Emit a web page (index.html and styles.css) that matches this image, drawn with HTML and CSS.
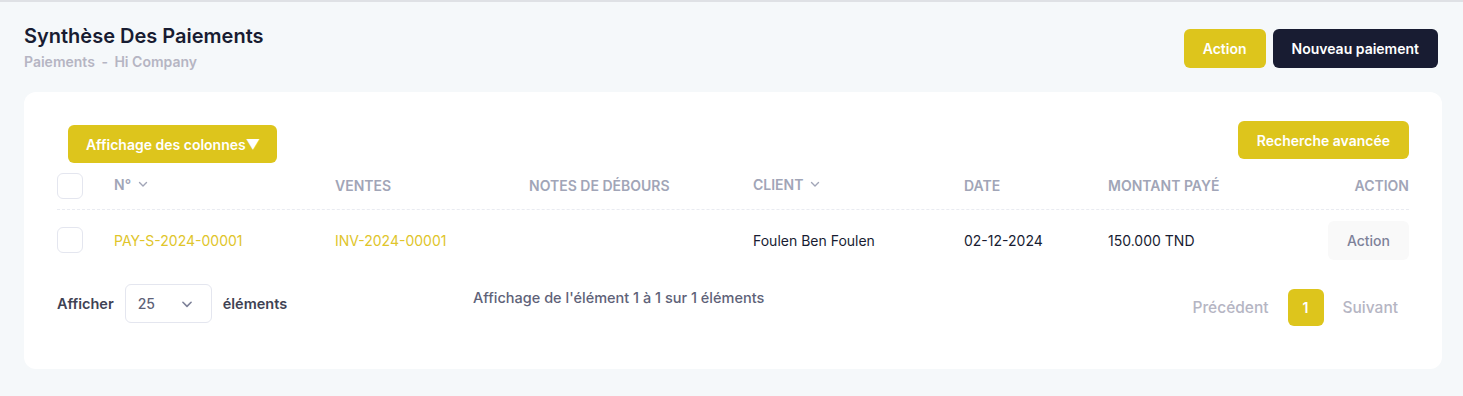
FILE: index.html
```html
<!DOCTYPE html>
<html>
<head>
	<meta charset="utf-8">
	<meta name="viewport" content="width=device-width, initial-scale=1">
	<title>Synthèse Des Paiements</title>
	<link rel="stylesheet" href="styles.css">
</head>
<body>
	<div class="page-head">
		<div>
			<h1 class="page-title">Synthèse Des Paiements</h1>
			<div class="crumbs">Paiements <span class="sep">-</span> Hi Company</div>
		</div>
		<div class="head-actions">
			<button class="btn btn-yellow">Action</button>
			<button class="btn btn-dark">Nouveau paiement</button>
		</div>
	</div>

	<div class="card">
		<div class="toolbar">
			<button class="btn btn-yellow btn-cols">Affichage des colonnes▼</button>
			<button class="btn btn-yellow">Recherche avancée</button>
		</div>

		<div class="grid head-row">
			<div><span class="check"></span></div>
			<div class="th">N° <svg class="chev" viewBox="0 0 12 12"><path d="M2.5 4.5 6 8l3.5-3.5"/></svg></div>
			<div class="th">Ventes</div>
			<div class="th">Notes de débours</div>
			<div class="th">Client <svg class="chev" viewBox="0 0 12 12"><path d="M2.5 4.5 6 8l3.5-3.5"/></svg></div>
			<div class="th">Date</div>
			<div class="th">Montant payé</div>
			<div class="th right">Action</div>
		</div>

		<div class="grid data-row">
			<div><span class="check"></span></div>
			<div class="link">PAY-S-2024-00001</div>
			<div class="link">INV-2024-00001</div>
			<div></div>
			<div>Foulen Ben Foulen</div>
			<div>02-12-2024</div>
			<div>150.000 TND</div>
			<div class="right"><button class="btn btn-light">Action</button></div>
		</div>

		<div class="footer">
			<div class="per-page">
				Afficher
				<div class="select">25 <svg class="chev sel-chev" viewBox="0 0 12 12"><path d="M2.5 4.5 6 8l3.5-3.5"/></svg></div>
				éléments
			</div>
			<div class="info">Affichage de l'élément 1 à 1 sur 1 éléments</div>
			<div class="pager">
				<span class="pg-text">Précédent</span>
				<span class="pg-num">1</span>
				<span class="pg-text">Suivant</span>
			</div>
		</div>
	</div>
</body>
</html>
```

FILE: styles.css
```css
* {
	box-sizing: border-box;
	margin: 0;
	padding: 0;
}
body {
	font-family: Inter, "Liberation Sans", sans-serif;
	background: #f5f8fa;
	border-top: 2px solid #dfe1e5;
	height: 396px;
	color: #181c32;
}
.page-head {display: flex; justify-content: space-between; align-items: flex-start; height: 90px; padding: 21px 25px 0 24px;}
.page-title {font-size: 20px; font-weight: 600; line-height: 26px; color: #181c32;}
.crumbs {margin-top: 4px; font-size: 14px; font-weight: 600; line-height: 18px; color: #b5b5c3;}
.crumbs .sep {margin: 0 3px;}
.head-actions {display: flex; gap: 7px; margin-top: 6px;}

.btn {
	font-family: inherit;
	font-size: 14px;
	font-weight: 600;
	border: none;
	border-radius: 6px;
	height: 39px;
	padding: 0 19px;
	color: #fff;
	cursor: pointer;
}
.btn-yellow {background: #ddc51c;}
.btn-dark {background: #181c32;}
.btn-light {background: #f9f9f9; color: #7e8299; font-weight: 500;}

.card {
	background: #fff;
	border-radius: 12px;
	margin: 0 21px 0 24px;
	height: 277px;
	padding: 29px 33px 0 33px;
}
.toolbar {display: flex; justify-content: space-between; align-items: flex-start; height: 41px;}
.toolbar .btn {height: 38px;}
.btn-cols {margin: 4px 0 0 11px; padding: 0 17px 0 18px;}

.grid {
	display: grid;
	grid-template-columns: 57px 221px 194px 224px 211px 144px 1fr auto;
	align-items: center;
}
.head-row {height: 48px; border-bottom: 1px dashed #e9ebf1;}
.th {font-size: 14px; font-weight: 600; color: #a1a5b7; text-transform: uppercase; display: flex; align-items: center; gap: 6px;}
.head-row .th:nth-child(2), .head-row .th:nth-child(5) {margin-top: -3px;}
.right {justify-self: end;}
.chev {width: 12px; height: 12px; fill: none; stroke: #a1a5b7; stroke-width: 1.4; stroke-linecap: round; stroke-linejoin: round;}
.check {display: block; width: 26px; height: 26px; border: 1px solid #e4e6ef; border-radius: 6px;}

.data-row {height: 60px; font-size: 14px; color: #181c32;}
.link {color: #e0c52a;}

.footer {display: flex; align-items: flex-start; margin-top: 14px;}
.per-page {display: flex; align-items: center; gap: 11px; font-size: 14.5px; font-weight: 600; color: #3f4254;}
.select {display: flex; align-items: center; justify-content: space-between; width: 87px; height: 39px; border: 1px solid #e4e6ef; border-radius: 6px; padding: 0 17px 0 12px; font-size: 14px; font-weight: 500; color: #5e6278;}
.sel-chev {width: 14px; height: 14px; stroke: #7e8299;}
.info {margin: 4px 0 0 186px; font-size: 14.5px; font-weight: 500; line-height: 20px; color: #5e6278;}
.pager {margin: 0 11px 0 auto; display: flex; align-items: center; gap: 19px; padding-top: 5px;}
.pg-text {font-size: 15.5px; font-weight: 500; color: #b5b5c3;}
.pg-num {display: flex; align-items: center; justify-content: center; width: 36px; height: 37px; border-radius: 6px; background: #ddc51c; color: #fff; font-size: 14px; font-weight: 600;}
```
